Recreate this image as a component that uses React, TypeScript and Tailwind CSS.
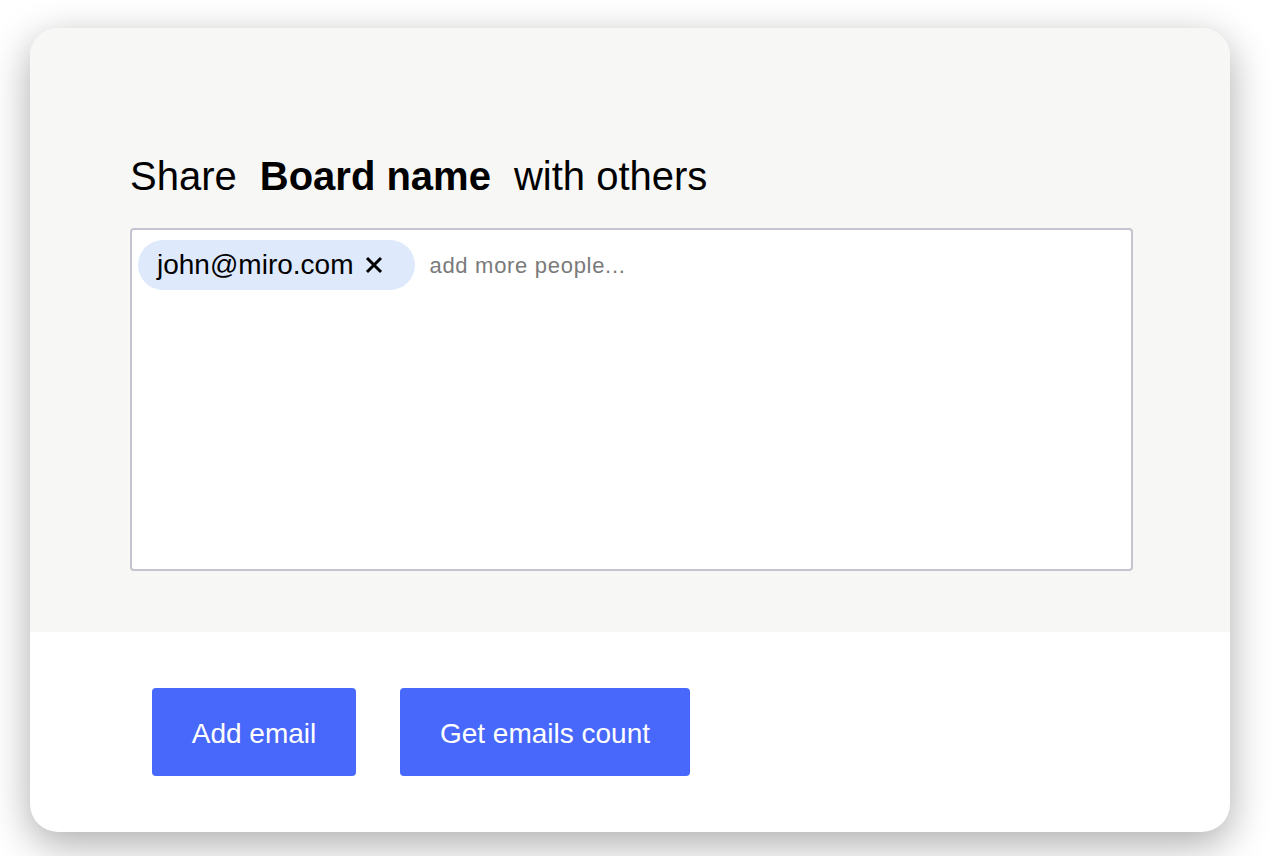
import React from "react";

export default function App() {
  return (
    <div className="min-h-[856px] w-full bg-white pl-[30px] pt-[28px] font-['Liberation_Sans',Arial,sans-serif]">
      <div className="w-[1200px] overflow-hidden rounded-[28px] bg-white shadow-[0_12px_40px_rgba(0,0,0,0.33)]">
        <div className="bg-[#f7f7f5] pb-[61px] pl-[100px] pt-[125px]">
          <h1 className="text-[40px] leading-[46px] text-black">
            <span>Share</span>
            <span className="mx-[23px] font-bold">Board name</span>
            <span>with others</span>
          </h1>
          <div className="mt-[29px] h-[343px] w-[1003px] rounded-[4px] border-2 border-[#c4c3d0] bg-white pl-[6px] pt-[10px]">
            <div className="flex items-center">
              <span className="flex h-[50px] items-center rounded-full bg-[#dee9fc] pl-[19px] pr-[31px] text-[28px] text-black">
                john@miro.com
                <svg className="ml-[11px]" width="20" height="20" viewBox="0 0 20 20" fill="none">
                  <path d="M3 3L17 17M17 3L3 17" stroke="black" strokeWidth="3" strokeLinecap="butt" />
                </svg>
              </span>
              <span className="ml-[14px] text-[22px] tracking-[0.7px] text-[#7a7a7a]">add more people...</span>
            </div>
          </div>
        </div>
        <div className="flex h-[200px] gap-[44px] pl-[122px] pt-[56px]">
          <button className="h-[88px] w-[204px] rounded-[4px] bg-[#4868fb] pt-[3px] text-[28px] text-white">
            Add email
          </button>
          <button className="h-[88px] w-[290px] rounded-[4px] bg-[#4868fb] pt-[3px] text-[28px] text-white">
            Get emails count
          </button>
        </div>
      </div>
    </div>
  );
}
